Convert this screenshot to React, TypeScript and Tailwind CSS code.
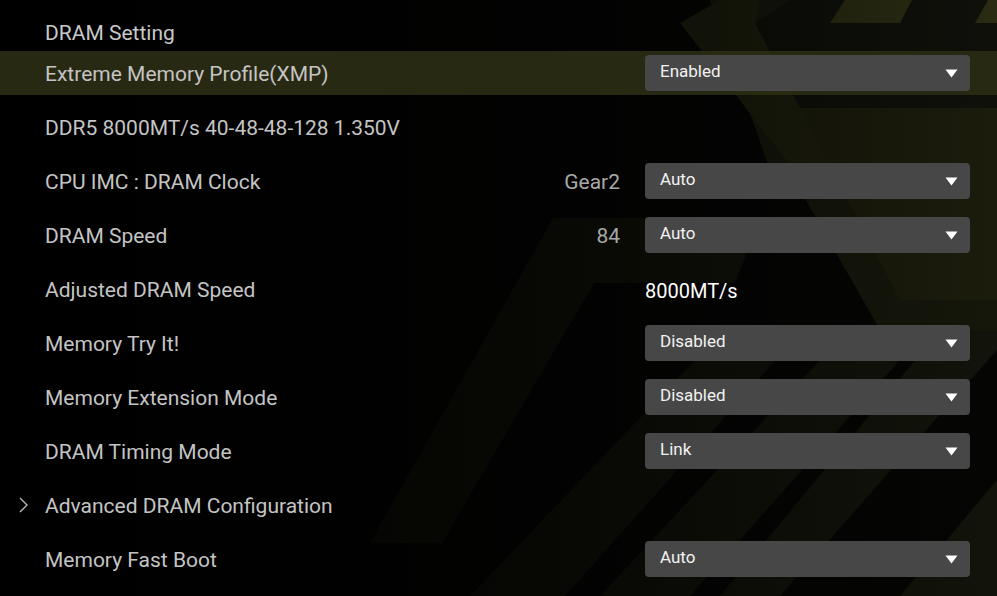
import React from 'react';

interface Row {
  label: string;
  value?: string;
  select?: string;
  text?: string;
  submenu?: boolean;
  active?: boolean;
}

const rows: Row[] = [
  { label: 'Extreme Memory Profile(XMP)', select: 'Enabled', active: true },
  { label: 'DDR5 8000MT/s 40-48-48-128 1.350V' },
  { label: 'CPU IMC : DRAM Clock', value: 'Gear2', select: 'Auto' },
  { label: 'DRAM Speed', value: '84', select: 'Auto' },
  { label: 'Adjusted DRAM Speed', text: '8000MT/s' },
  { label: 'Memory Try It!', select: 'Disabled' },
  { label: 'Memory Extension Mode', select: 'Disabled' },
  { label: 'DRAM Timing Mode', select: 'Link' },
  { label: 'Advanced DRAM Configuration', submenu: true },
  { label: 'Memory Fast Boot', select: 'Auto' },
];

function Backdrop() {
  return (
    <svg className="absolute inset-0 w-full h-full" viewBox="0 0 997 596" preserveAspectRatio="none">
      <defs>
        <linearGradient id="fade" x1="0" y1="0" x2="1" y2="0">
          <stop offset="0" stopColor="#000" stopOpacity="1" />
          <stop offset="0.55" stopColor="#000" stopOpacity="0.6" />
          <stop offset="1" stopColor="#000" stopOpacity="0" />
        </linearGradient>
      </defs>
      <rect width="997" height="596" fill="#050504" />
      {/* top right chevrons */}
      <polygon points="710,0 997,0 997,330 880,330 800,190 770,170" fill="#16170b" />
      <polygon points="680,23 720,0 760,0 755,23 830,165 790,165" fill="#1d1e0d" />
      <polygon points="755,23 790,0 997,0 997,108 800,108" fill="#0f100a" />
      <polygon points="845,0 912,0 900,23 830,23" fill="#2a2b12" />
      <polygon points="988,0 997,0 997,23 975,23" fill="#2a2b12" />
      <polygon points="800,108 997,108 997,300 900,300" fill="#1b1c0c" />
      {/* big slanted band */}
      <polygon points="553,218 760,218 735,283 594,283 442,543 370,543" fill="#13140a" />
      {/* lower right stripes */}
      <polygon points="700,355 780,355 565,596 470,596" fill="#12130a" />
      <polygon points="820,360 900,360 690,596 600,596" fill="#12130a" />
      <polygon points="940,330 997,330 997,350 780,596 720,596" fill="#12130a" />
      <polygon points="997,480 997,596 900,596" fill="#12130a" />
      {/* left corner stripe */}
      <polygon points="0,440 0,596 45,596" fill="#0f100a" />
      <rect width="997" height="596" fill="url(#fade)" />
    </svg>
  );
}

function Select({ value }: { value: string }) {
  return (
    <div className="w-[325px] h-9 rounded bg-[#474747] flex items-center justify-between pl-[15px] pr-3">
      <span className="text-[17px] text-[#f2f2f2] leading-none -mt-1">{value}</span>
      <svg className="w-[13px] h-[10px]" viewBox="0 0 13 10">
        <path d="M0.5 1.5h12L6.5 9.5z" fill="#ffffff" />
      </svg>
    </div>
  );
}

export default function App() {
  return (
    <div
      className="relative w-[997px] h-[596px] overflow-hidden bg-black"
      style={{ fontFamily: 'Roboto, "Noto Sans", sans-serif' }}
    >
      <Backdrop />
      <div className="relative flex flex-col">
        <div className="h-[46px] pt-[20px] pl-[45px] flex items-center text-[21px] leading-none text-[#c8c8c8]">
          DRAM Setting
        </div>
        {rows.map((row) => (
          <div key={row.label} className="h-[54px] flex items-center">
            <div className={`w-full flex items-center ${row.active ? 'h-[44px] bg-[#2a2b13]/95' : 'h-full'}`}>
              <div className="w-[45px] flex justify-center">
                {row.submenu && (
                  <svg className="w-[12px] h-[18px]" viewBox="0 0 12 18">
                    <path d="M3 2l7 7-7 7" stroke="#b8b8b8" strokeWidth="1.4" fill="none" />
                  </svg>
                )}
              </div>
              <div className="flex-1 text-[21px] text-[#c4c4c4] leading-none mt-[2px]">{row.label}</div>
              <div className="text-[21px] text-[#a8a8a8] leading-none mt-[2px] text-right">{row.value}</div>
              <div className="w-[325px] ml-[25px] mr-[27px] flex items-center">
                {row.select && <Select value={row.select} />}
                {row.text && <span className="text-[20px] text-white leading-none mt-[3px]">{row.text}</span>}
              </div>
            </div>
          </div>
        ))}
      </div>
    </div>
  );
}
